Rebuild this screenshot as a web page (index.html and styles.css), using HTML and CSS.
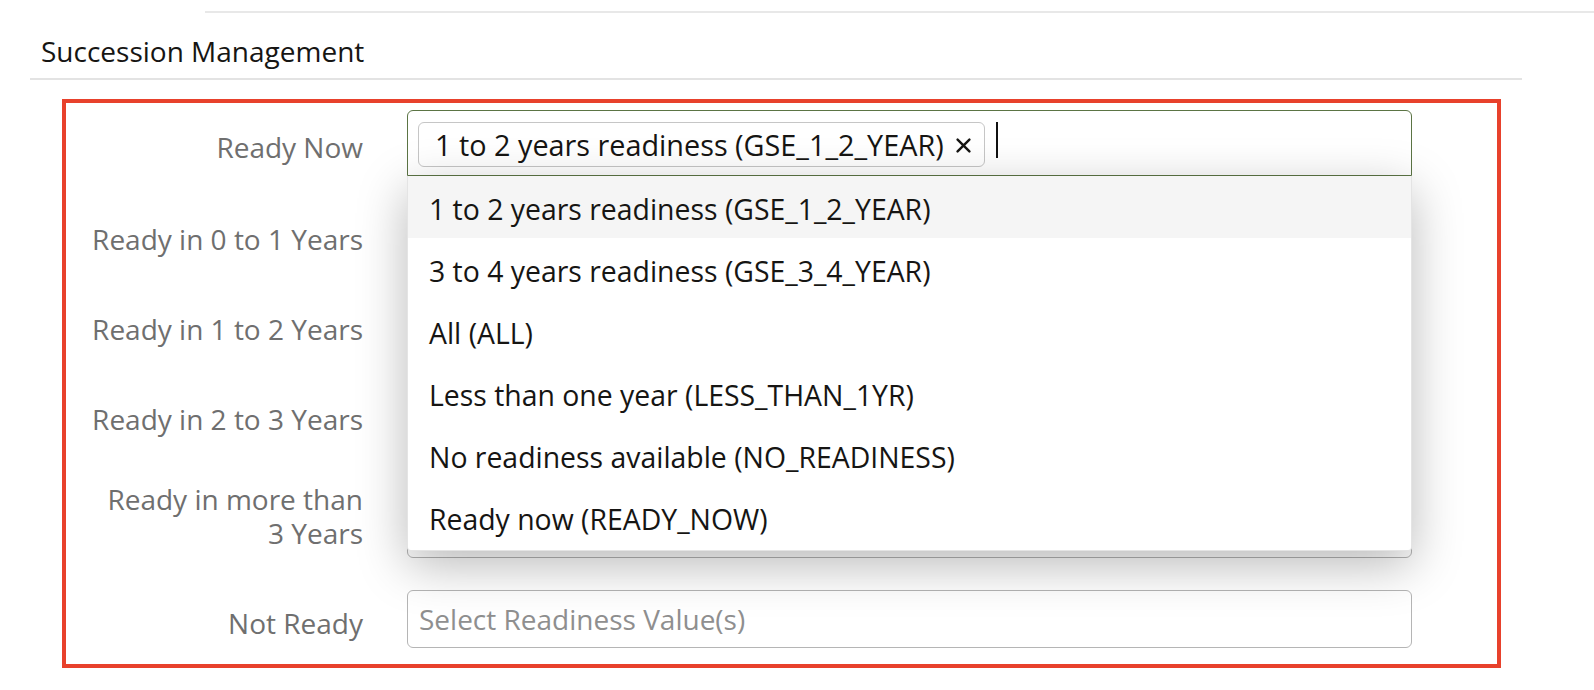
FILE: index.html
```html
<!DOCTYPE html>
<html lang="en">
<head>
<meta charset="utf-8">
<title>Succession Management</title>
<link rel="stylesheet" href="styles.css">
</head>
<body>
<div class="topline"></div>
<section class="panel">
  <h2 class="panel-title">Succession Management</h2>
  <div class="form-box">
    <div class="form-row form-row--chips">
      <label class="field-label">Ready Now</label>
      <div class="field">
        <div class="input input--focused">
          <span class="chip">
            <span class="chip-text">1 to 2 years readiness (GSE_1_2_YEAR)</span>
            <svg class="chip-x" width="15" height="15" viewBox="0 0 15 15" aria-hidden="true"><path d="M1.6 1.6 L13.4 13.4 M13.4 1.6 L1.6 13.4" stroke="#161513" stroke-width="2.4" stroke-linecap="round" fill="none"/></svg>
          </span>
          <span class="caret"></span>
        </div>
        <ul class="dropdown">
          <li class="option option--active">1 to 2 years readiness (GSE_1_2_YEAR)</li>
          <li class="option">3 to 4 years readiness (GSE_3_4_YEAR)</li>
          <li class="option">All (ALL)</li>
          <li class="option">Less than one year (LESS_THAN_1YR)</li>
          <li class="option">No readiness available (NO_READINESS)</li>
          <li class="option">Ready now (READY_NOW)</li>
        </ul>
      </div>
    </div>
    <div class="form-row">
      <label class="field-label">Ready in 0 to 1 Years</label>
      <div class="field"><div class="input"></div></div>
    </div>
    <div class="form-row">
      <label class="field-label">Ready in 1 to 2 Years</label>
      <div class="field"><div class="input"></div></div>
    </div>
    <div class="form-row">
      <label class="field-label">Ready in 2 to 3 Years</label>
      <div class="field"><div class="input"></div></div>
    </div>
    <div class="form-row form-row--tall">
      <label class="field-label">Ready in more than 3 Years</label>
      <div class="field"><div class="input"></div></div>
    </div>
    <div class="form-row form-row--last">
      <label class="field-label">Not Ready</label>
      <div class="field"><div class="input"><span class="placeholder">Select Readiness Value(s)</span></div></div>
    </div>
  </div>
</section>
</body>
</html>
```
FILE: styles.css
```css
* { box-sizing: border-box; }

html, body {
  margin: 0;
  padding: 0;
  background: #ffffff;
}

body {
  font-family: "Open Sans", "Noto Sans", sans-serif;
  font-size: 28px;
  line-height: 34px;
  color: #161513;
}

.topline {
  margin: 11px 0 0 205px;
  border-top: 2px solid #e8e8e8;
}

.panel {
  margin-left: 30px;
  width: 1492px;
}

.panel-title {
  margin: 21px 0 0;
  padding: 0 0 10px 11px;
  font-size: 28px;
  font-weight: 400;
  line-height: 34px;
  color: #161513;
  border-bottom: 2px solid #e3e3e3;
}

.form-box {
  margin: 19px 0 0 32px;
  width: 1439px;
  border: 4px solid #e8412c;
  padding: 7px 0 16px;
  display: flex;
  flex-direction: column;
  gap: 32px;
}

.form-row {
  display: grid;
  grid-template-columns: 297px 1005px;
  column-gap: 44px;
  align-items: end;
}

.field-label {
  padding: 2px 0 10px 23px;
  text-align: right;
  color: #6f6f6f;
  line-height: 34px;
}

.form-row--chips .field-label {
  padding-bottom: 12px;
}

.form-row--tall .field-label {
  padding-top: 4px;
  padding-bottom: 8px;
}

.form-row--last .field-label {
  padding-bottom: 8px;
}

.field {
  position: relative;
}

.input {
  display: flex;
  align-items: flex-start;
  height: 58px;
  padding: 11px 11px;
  border: 1px solid #b5b5b5;
  border-radius: 6px;
  background: #ffffff;
}

.input--focused {
  height: 66px;
  padding: 11px 10px 8px;
  border-color: #5b7444;
  border-radius: 6px 6px 0 0;
}

.placeholder {
  color: #8f8f8f;
  white-space: nowrap;
}

.chip {
  display: inline-flex;
  align-items: center;
  padding: 5px 13px 4px 16px;
  border: 1px solid #c6c6c6;
  border-radius: 6px;
  background: #ffffff;
  font-size: 28.8px;
  white-space: nowrap;
}

.chip-x {
  margin-left: 12px;
  flex: none;
}

.caret {
  width: 2px;
  height: 36px;
  margin-left: 11px;
  background: #111111;
}

.dropdown {
  position: absolute;
  top: 100%;
  left: 0;
  right: 0;
  z-index: 2;
  margin: 0;
  padding: 0 0 2px;
  list-style: none;
  background: #ffffff;
  border: 1px solid #e4e4e4;
  border-top: 0;
  border-radius: 0 0 4px 4px;
  box-shadow: 0 14px 50px rgba(0, 0, 0, 0.28);
}

.option {
  padding: 16px 21px 12px;
  font-size: 28.4px;
  line-height: 34px;
  color: #161513;
  white-space: nowrap;
}

.option--active {
  background: #f5f5f5;
}
```
